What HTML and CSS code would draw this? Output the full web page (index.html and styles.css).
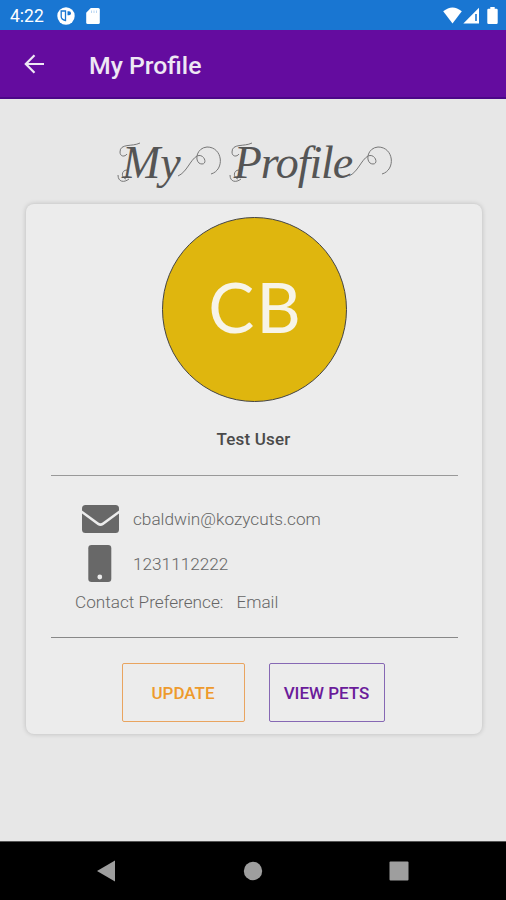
FILE: index.html
```html
<!DOCTYPE html>
<html lang="en">
<head>
    <meta charset="UTF-8">
    <meta name="viewport" content="width=device-width, initial-scale=1.0">
    <title>My Profile</title>
    <link rel="stylesheet" href="styles.css">
</head>
<body>

    <div class="status-bar">
        <span class="time">4:22</span>
        <svg class="app-icon" width="18" height="18" viewBox="0 0 18 18">
            <circle cx="9" cy="9" r="8.7" fill="#fff"/>
            <path d="M8.5 4H4.2V9.5Q4.2 12.5 8.5 13.5Z" fill="#fff" stroke="#1976d2" stroke-width="1.3"/>
            <path d="M10.5 4.2H12A2 2 0 0 1 12 8.2H10.5Z" fill="#1976d2"/>
        </svg>
        <svg class="sd-icon" width="14" height="16" viewBox="0 0 14 16">
            <path d="M4.8 0H12.3Q13.8 0 13.8 1.5V14.5Q13.8 16 12.3 16H1.7Q.2 16 .2 14.5V4.8Z" fill="#fff"/>
            <path d="M5.5 2.5V5M8 2.5V5M10.5 2.5V5" stroke="#b8d5f2" stroke-width="1"/>
        </svg>
        <div class="status-right">
            <svg width="19" height="17" viewBox="0 0 19 17">
                <path d="M.2 4.3Q9.5-3.3 18.8 4.3L9.5 16.5Z" fill="#fff"/>
            </svg>
            <svg width="17" height="17" viewBox="0 0 17 17">
                <path d="M16 .8V16.5H.3Z" fill="#fff"/>
                <path d="M13 7V14" stroke="#1976d2" stroke-width="1.6"/>
            </svg>
            <svg class="battery" width="11" height="17" viewBox="0 0 11 17">
                <path d="M3.3 0H7.7V1.8H9.5Q10.7 1.8 10.7 3V15.8Q10.7 17 9.5 17H1.5Q.3 17 .3 15.8V3Q.3 1.8 1.5 1.8H3.3Z" fill="#fff"/>
            </svg>
        </div>
    </div>

    <div class="app-bar">
        <svg width="20" height="20" viewBox="0 0 20 20" fill="none" stroke="#eee8f4" stroke-width="2.2">
            <path d="M20 10H2M10.5 1.2L1.8 10L10.5 18.8"/>
        </svg>
        <span class="app-title">My Profile</span>
    </div>

    <div class="content">
        <h1 class="heading">
            <svg class="curl" width="24" height="44" viewBox="0 0 24 44">
                <path d="M23 3C15 7 3 3 3 12C3 17 8 17 10 14M10 30C4 30 4 38 9 39M1 35C1 42 7 43 12 39"/>
            </svg>
            <span>My</span>
            <svg class="swash" width="44" height="38" viewBox="0 0 44 38">
                <path d="M1 33C10 29 13 17 20 13C27 10 31 21 25 21C17 21 18 5 30 4C46 4 48 27 34 31"/>
            </svg>
            <svg class="curl second" width="24" height="44" viewBox="0 0 24 44">
                <path d="M23 3C15 7 3 3 3 12C3 17 8 17 10 14M10 30C4 30 4 38 9 39M1 35C1 42 7 43 12 39"/>
            </svg>
            <span class="word">Profile</span>
            <svg class="swash" width="44" height="38" viewBox="0 0 44 38">
                <path d="M1 33C10 29 13 17 20 13C27 10 31 21 25 21C17 21 18 5 30 4C46 4 48 27 34 31"/>
            </svg>
        </h1>

        <div class="card">
            <div class="avatar">CB</div>
            <div class="name">Test User</div>

            <div class="details">
                <div class="row">
                    <svg width="37" height="28" viewBox="0 0 37 28">
                        <path d="M3.5 0H33.5Q37 0 37 3.5V5.5L20.5 17.5Q18.5 18.8 16.5 17.5L0 5.5V3.5Q0 0 3.5 0Z"/>
                        <path d="M0 8.5L15.5 20Q18.5 22 21.5 20L37 8.5V24.5Q37 28 33.5 28H3.5Q0 28 0 24.5Z"/>
                    </svg>
                    <span>cbaldwin@kozycuts.com</span>
                </div>
                <div class="row phone">
                    <svg width="37" height="37" viewBox="0 0 37 37">
                        <rect x="6.3" width="23" height="37" rx="3.2"/>
                        <circle cx="17.8" cy="32" r="2.4" fill="#ececec"/>
                    </svg>
                    <span>1231112222</span>
                </div>
                <div class="preference">
                    <span>Contact Preference:</span>
                    <span>Email</span>
                </div>
            </div>

            <div class="buttons">
                <button class="btn update">UPDATE</button>
                <button class="btn pets">VIEW PETS</button>
            </div>
        </div>
    </div>

    <div class="nav-bar">
        <svg width="20" height="22" viewBox="0 0 20 22"><path d="M1 11L19 .5V21.5Z"/></svg>
        <svg width="20" height="20" viewBox="0 0 20 20"><circle cx="10" cy="10" r="9.2"/></svg>
        <svg width="20" height="20" viewBox="0 0 20 20"><rect x=".5" y=".5" width="19" height="19" rx="1"/></svg>
    </div>

</body>
</html>
```
FILE: styles.css
```css
* {
    box-sizing: border-box;
}
body {
    margin: 0;
    height: 900px;
    display: flex;
    flex-direction: column;
    background-color: #e7e7e7;
    font-family: Roboto, Arial, sans-serif;
    overflow: hidden;
}
svg {
    display: block;
    flex-shrink: 0;
}
.status-bar {
    display: flex;
    align-items: center;
    height: 30px;
    padding: 1px 8px 0 10px;
    background-color: #1976d2;
    color: #fff;
}
.time {
    width: 47px;
    font-size: 17.5px;
}
.sd-icon {
    margin-left: 11px;
}
.status-right {
    display: flex;
    align-items: center;
    margin-left: auto;
}
.status-right svg + svg {
    margin-left: 1px;
}
.status-right .battery {
    margin-left: 7px;
}
.app-bar {
    display: flex;
    align-items: center;
    height: 69px;
    padding: 0 24px;
    border-bottom: 2px solid #4b0788;
    background-color: #640c9f;
    color: #eee8f4;
}
.app-title {
    margin-left: 45px;
    padding-top: 4px;
    font-size: 24.8px;
    font-weight: 500;
}
.content {
    flex: 1;
    padding: 31px 24px 0 26px;
}
.heading {
    display: flex;
    align-items: center;
    height: 64px;
    margin: 0 0 10px 91px;
    color: #555;
    font-family: "Liberation Serif", serif;
    font-size: 46px;
    font-style: italic;
    font-weight: normal;
    white-space: nowrap;
}
.heading .word {
    letter-spacing: -1.1px;
}
.curl,
.swash {
    fill: none;
    stroke: #777;
    stroke-width: 1;
}
.curl {
    margin-right: -19px;
}
.curl.second {
    margin-left: 8px;
}
.swash {
    margin-left: -4px;
}
.card {
    height: 530px;
    padding: 13px 24px 0 25px;
    border-radius: 8px;
    background-color: #ececec;
    box-shadow: 0 0 5px rgba(0, 0, 0, 0.2);
}
.avatar {
    display: flex;
    align-items: center;
    justify-content: center;
    width: 185px;
    height: 185px;
    margin: 0 auto;
    padding: 0 0 6px 2px;
    border: 1px solid #444;
    border-radius: 50%;
    background-color: #dfb60e;
    color: #f7f4e8;
    font-family: Lato, sans-serif;
    font-size: 69px;
    letter-spacing: 2px;
}
.name {
    height: 73px;
    padding: 27px 2px 0 0;
    color: #4a4a4a;
    font-size: 17px;
    font-weight: 500;
    line-height: 21px;
    text-align: center;
    letter-spacing: 0.2px;
}
.details {
    height: 163px;
    padding: 29px 24px 0;
    border-top: 1.5px solid #999;
    border-bottom: 1.5px solid #888;
    color: #666;
    font-size: 17.2px;
    font-weight: 300;
}
.row {
    display: flex;
    align-items: center;
    gap: 14px;
    height: 28px;
    padding-left: 7px;
}
.row svg {
    fill: #686868;
}
.row.phone {
    height: 37px;
    margin-top: 12px;
}
.preference {
    display: flex;
    gap: 13px;
    margin-top: 9px;
    line-height: 22px;
}
.buttons {
    display: flex;
    gap: 24px;
    padding: 25px 0 0 71px;
}
.btn {
    height: 59px;
    padding: 0 1px 0 0;
    border: 1px solid;
    border-radius: 2px;
    background: none;
    font-family: inherit;
    font-size: 17px;
    font-weight: 500;
}
.update {
    width: 123px;
    border-color: #e9a45f;
    color: #ee9a2c;
}
.pets {
    width: 116px;
    border-color: #8668b4;
    color: #6a1b9a;
}
.nav-bar {
    display: flex;
    align-items: center;
    justify-content: space-between;
    height: 59px;
    padding: 0 97px 0 96px;
    border-top: 1px solid #555;
    background-color: #000;
}
.nav-bar svg {
    fill: #9e9e9e;
}
```
